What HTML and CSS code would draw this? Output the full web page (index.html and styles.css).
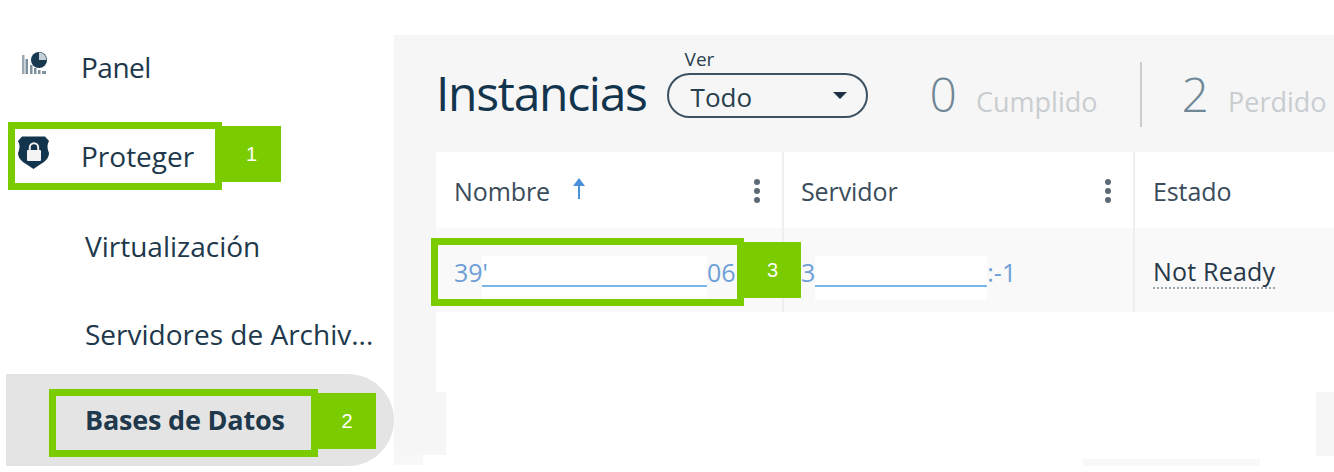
FILE: index.html
```html
<!DOCTYPE html>
<html lang="es">
<head>
<meta charset="utf-8">
<title>Instancias</title>
<link rel="stylesheet" href="styles.css">
</head>
<body>
<div class="app">
  <nav class="sidebar">
    <div class="nav-item top first">
      <svg class="nav-icon" viewBox="0 0 25 23" width="25" height="23">
        <rect x="0" y="3" width="2.500" height="19" fill="#9aa8b2"/>
        <rect x="3.500" y="7" width="2.500" height="15" fill="#7c909e"/>
        <rect x="8" y="13" width="2.500" height="9" fill="#7c909e"/>
        <rect x="12" y="16" width="2.500" height="6" fill="#7c909e"/>
        <rect x="16" y="18" width="2.500" height="4" fill="#7c909e"/>
        <rect x="20" y="19" width="4" height="3" fill="#7c909e"/>
        <circle cx="17" cy="8" r="8" fill="#17384f"/>
        <path d="M17 8V0.500A7.500 7.500 0 0 1 24.500 8Z" fill="#c5d0d8"/>
      </svg>
      <span class="panel-label">Panel</span>
    </div>
    <div class="nav-item top second">
      <svg class="nav-icon" viewBox="0 0 31 33" width="31" height="33">
        <path d="M4 0.500H27L31 5C29 9 29 12 31 17C31 25 22 28 15.500 33C9 28 0 25 0 17C2 12 2 9 0 5Z" fill="#12344d"/>
        <rect x="9" y="14" width="14" height="11" rx="1" fill="#f3f3f3"/>
        <path d="M11.800 14V11.500a4.200 4.200 0 0 1 8.400 0V14" fill="none" stroke="#f3f3f3" stroke-width="2"/>
      </svg>
      <span>Proteger</span>
    </div>
    <div class="nav-item sub virt">Virtualización</div>
    <div class="nav-item sub files">Servidores de Archiv...</div>
    <div class="nav-item sub active">Bases de Datos</div>
  </nav>
  <main class="main">
    <header class="head">
      <h1 class="title">Instancias</h1>
      <div class="view">
        <span class="view-label">Ver</span>
        <div class="select"><span>Todo</span><i class="caret"></i></div>
      </div>
      <div class="stat met"><b>0</b><span>Cumplido</span></div>
      <div class="stat lost"><b>2</b><span>Perdido</span></div>
    </header>
    <section class="table">
      <div class="row head-row">
        <div class="cell c1">
          <span>Nombre</span>
          <svg class="arrow" viewBox="0 0 14 22" width="14" height="22"><path d="M7 21V4" fill="none" stroke="#4a90d9" stroke-width="2"/><path d="M7 0L13 8H1Z" fill="#4a90d9"/></svg>
          <i class="dots"></i>
        </div>
        <div class="cell c2"><span>Servidor</span><i class="dots"></i></div>
        <div class="cell c3"><span>Estado</span></div>
      </div>
      <div class="row data-row">
        <div class="cell c1 link"><span class="over">39'</span><span class="mask m1"></span><span>06</span></div>
        <div class="cell c2 link"><span>3</span><span class="mask m2"></span><span>:-1</span></div>
        <div class="cell c3"><span class="status">Not Ready</span></div>
      </div>
    </section>
  </main>
</div>

<div class="patch patch-left"></div>
<div class="patch patch-right"></div>
<div class="patch patch-foot"></div>
<div class="patch patch-corner"></div>

<div class="callout box1"></div><div class="tag tag1">1</div>
<div class="callout box2"></div><div class="tag tag2">2</div>
<div class="callout box3"></div><div class="tag tag3">3</div>
</body>
</html>
```

FILE: styles.css
```css
* { box-sizing: border-box; }
html, body { margin: 0; height: 472px; overflow: hidden; background: #fff; }
body { position: relative; width: 1334px; font-family: "Open Sans", "Noto Sans", sans-serif; color: #1d3345; }

.app { display: flex; width: 1334px; height: 472px; }

.sidebar { width: 394px; flex: none; padding: 23px 0 0 6px; }
.nav-item { display: flex; align-items: center; font-size: 28px; color: #20384b; white-space: nowrap; }
.nav-item.top { padding-left: 75px; position: relative; }
.nav-item.first { height: 87px; }
.nav-item.second { height: 92px; }
.nav-item.sub { padding-left: 79px; }
.nav-item.virt { height: 88px; }
.nav-item.files { height: 85px; padding-top: 3px; }
.panel-label { letter-spacing: -0.5px; }
.nav-icon { position: absolute; }
.nav-item.first .nav-icon { left: 16px; top: 29px; }
.nav-item.second .nav-icon { left: 12px; top: 26px; }
.nav-item.active { height: 92px; margin-top: -1px; font-size: 27px; letter-spacing: -0.2px; font-weight: 700; background: #e4e4e5; border-radius: 0 46px 46px 0; padding-bottom: 2px; }

.main { flex: none; width: 940px; margin-top: 35px; height: 420px; background: #f6f6f6; padding-left: 42px; display: flex; flex-direction: column; }

.head { height: 117px; display: flex; align-items: flex-start; }
.title { margin: 23px 0 0 0; font-size: 48px; line-height: 70px; font-weight: 400; letter-spacing: -1.3px; color: #12344d; }
.view { position: relative; margin: 38px 0 0 20px; width: 201px; }
.view-label { position: absolute; left: 18px; top: -26px; font-size: 19px; line-height: 24px; color: #2a3f50; }
.select { width: 201px; height: 45px; border: 2px solid #3c5263; border-radius: 23px; display: flex; align-items: center; justify-content: space-between; padding: 2px 19px 0 22px; font-size: 26px; color: #27404f; }
.caret { width: 0; height: 0; border-left: 7px solid transparent; border-right: 7px solid transparent; border-top: 7px solid #1d3345; margin-top: -2px; }

.stat { display: flex; align-items: baseline; color: #c9cdd0; font-size: 27px; height: 64px; margin-top: 27px; }
.stat b { font-weight: 300; font-size: 48px; line-height: 64px; color: #6f8797; margin-right: 19px; }
.met { margin-left: 62px; width: 210px; }
.lost { border-left: 2px solid #c9cdd0; padding-left: 40px; height: 65px; }

.table { flex: 1; background: #fff; }
.row { display: flex; }
.head-row { height: 76px; font-size: 25px; letter-spacing: -0.1px; color: #3a4c5a; }
.head-row .cell { padding-top: 2px; }
.data-row { height: 84px; background: #f9f9f9; font-size: 25px; }
.cell { position: relative; display: flex; align-items: center; }
.c1 { width: 346px; padding-left: 18px; }
.c2 { width: 351px; padding-left: 17px; border-left: 2px solid #efefef; }
.c3 { flex: 1; padding-left: 18px; border-left: 2px solid #efefef; }
.arrow { margin: -4px 0 0 22px; }
.dots { position: absolute; right: 22px; top: 27px; width: 6px; height: 6px; border-radius: 50%; background: #5c6a75; box-shadow: 0 9px 0 #5c6a75, 0 18px 0 #5c6a75; }
.data-row .cell { padding-top: 4px; }
.link { color: #6f9fd8; white-space: nowrap; }
.over { position: relative; }
.mask { display: block; flex: none; height: 44px; margin-top: 12px; background: linear-gradient(#79b7e8, #79b7e8) 0 29px / 100% 2px no-repeat, #fff; }
.m1 { width: 225px; margin-left: -6px; }
.m2 { width: 172px; margin-left: 0; }
.status { border-bottom: 2px dotted #9aa5ad; line-height: 32px; letter-spacing: 0.2px; color: #27384a; }

.patch { position: absolute; background: #f6f6f6; }
.patch-left { left: 436px; top: 392px; width: 10px; height: 63px; }
.patch-right { right: 0; top: 392px; width: 18px; height: 64px; }
.patch-foot { left: 1083px; top: 459px; width: 177px; height: 7px; background: #f8f8f8; }
.patch-corner { left: 394px; top: 455px; width: 29px; height: 10px; background: #f8f8f8; }

.callout { position: absolute; border: 7px solid #7acc00; }
.box1 { left: 8px; top: 122px; width: 214px; height: 68px; }
.box2 { left: 49px; top: 389px; width: 269px; height: 68px; }
.box3 { left: 431px; top: 238px; width: 313px; height: 68px; }
.tag { position: absolute; width: 58px; height: 56px; background: #7acc00; color: #fff; display: flex; align-items: center; justify-content: center; font-family: "Liberation Sans", sans-serif; font-size: 20px; }
.tag1 { left: 222px; top: 126px; width: 59px; }
.tag2 { left: 318px; top: 393px; }
.tag3 { left: 744px; top: 242px; width: 57px; }
```
